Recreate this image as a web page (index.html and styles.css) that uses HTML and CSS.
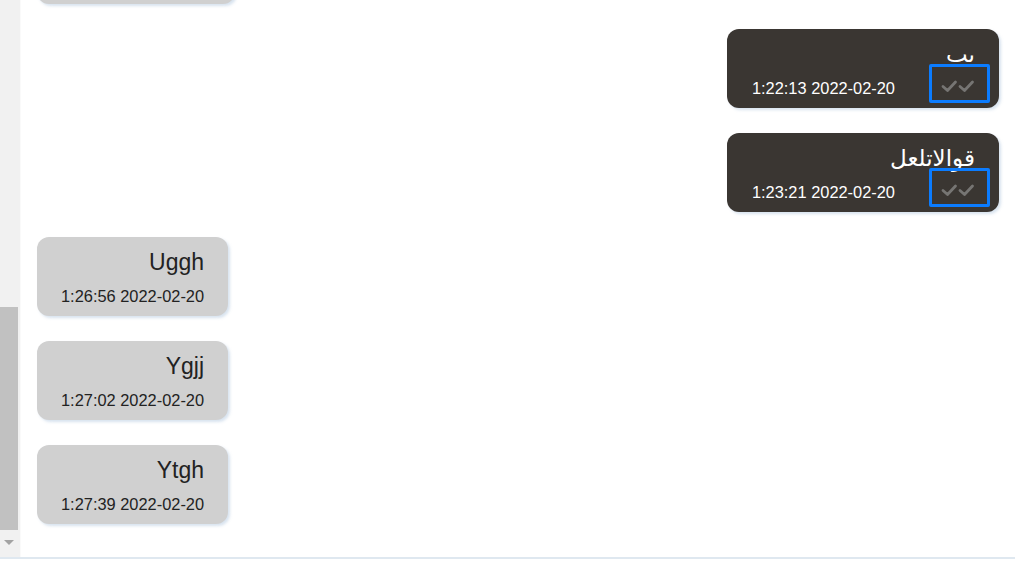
FILE: index.html
```html
<!DOCTYPE html>
<html lang="ar" dir="rtl">
<head>
    <meta charset="UTF-8">
    <meta name="viewport" content="width=device-width, initial-scale=1.0">
    <title>المحادثة</title>
    <link rel="stylesheet" href="styles.css">
</head>
<body>
<div class="frame">
    <div class="chat">
        <div class="messages">
            <div class="bubble theirs partial"></div>

            <div class="bubble mine">
                <p class="text">بب</p>
                <div class="meta">
                    <span class="ticks">
                        <svg width="40" height="16" viewBox="0 0 40 16"><path d="M3 8.5l4.5 4 8-8.5M20 8.5l4.5 4 8-8.5" fill="none" stroke="#767573" stroke-width="2.8" stroke-linecap="round" stroke-linejoin="round"/></svg>
                    </span>
                    <span class="time" dir="ltr">1:22:13 2022-02-20</span>
                </div>
            </div>

            <div class="bubble mine">
                <p class="text">قوالاتلعل</p>
                <div class="meta">
                    <span class="ticks">
                        <svg width="40" height="16" viewBox="0 0 40 16"><path d="M3 8.5l4.5 4 8-8.5M20 8.5l4.5 4 8-8.5" fill="none" stroke="#767573" stroke-width="2.8" stroke-linecap="round" stroke-linejoin="round"/></svg>
                    </span>
                    <span class="time" dir="ltr">1:23:21 2022-02-20</span>
                </div>
            </div>

            <div class="bubble theirs">
                <p class="text">Uggh</p>
                <div class="meta"><span class="time" dir="ltr">1:26:56 2022-02-20</span></div>
            </div>

            <div class="bubble theirs">
                <p class="text">Ygjj</p>
                <div class="meta"><span class="time" dir="ltr">1:27:02 2022-02-20</span></div>
            </div>

            <div class="bubble theirs">
                <p class="text">Ytgh</p>
                <div class="meta"><span class="time" dir="ltr">1:27:39 2022-02-20</span></div>
            </div>
        </div>
    </div>
    <div class="scrollbar">
        <div class="thumb"></div>
        <div class="arrow"></div>
    </div>
</div>
</body>
</html>
```

FILE: styles.css
```css
body {
    margin: 0;
    padding: 0;
    background-color: #fff;
    font-family: "Liberation Sans", Arial, "DejaVu Sans", sans-serif;
}

.frame {
    display: flex;
    width: 1015px;
    height: 557px;
    margin-left: 0;
    margin-right: auto;
    border-bottom: 2px solid #dfe8f0;
}

.scrollbar {
    width: 20px;
    flex-shrink: 0;
    display: flex;
    flex-direction: column;
    justify-content: flex-end;
    align-items: flex-end;
    background-color: #f1f1f1;
    border-right: 1px solid #fafafa;
}

.thumb {
    width: 18px;
    height: 223px;
    background-color: #c1c1c1;
}

.arrow {
    width: 18px;
    height: 27px;
    display: flex;
    justify-content: center;
    align-items: center;
}

.arrow::before {
    content: "";
    border-top: 5px solid #a3a3a3;
    border-left: 5px solid transparent;
    border-right: 5px solid transparent;
    margin-top: -3px;
}

.chat {
    flex: 1;
    overflow: hidden;
    padding: 0 16px;
}

.messages {
    display: flex;
    flex-direction: column;
    gap: 25px;
    margin-top: -75px;
}

.bubble {
    padding: 10px 24px 10px 24px;
    border-radius: 12px;
    box-shadow: 2px 2px 3px rgba(200, 215, 232, 0.7);
}

.bubble.mine {
    align-self: flex-start;
    background-color: #3a3632;
    color: #fff;
    padding-left: 25px;
}

.bubble.theirs {
    align-self: flex-end;
    background-color: #d0d0d0;
    color: #222;
}

.bubble.partial {
    width: 150px;
    height: 59px;
}

.text {
    margin: 0;
    font-size: 23px;
    line-height: 30px;
    text-align: right;
}

.meta {
    display: flex;
    justify-content: space-between;
    align-items: flex-start;
    gap: 34px;
    margin-top: 9px;
    height: 20px;
}

.time {
    font-size: 16.4px;
    line-height: 20px;
}

.ticks {
    width: 55px;
    height: 33px;
    margin-top: -14px;
    margin-right: -15px;
    border: 3px solid #0b7cff;
    border-radius: 2px;
    display: flex;
    align-items: center;
    justify-content: center;
}

.ticks svg {
    display: block;
    margin-top: 5px;
}
```
